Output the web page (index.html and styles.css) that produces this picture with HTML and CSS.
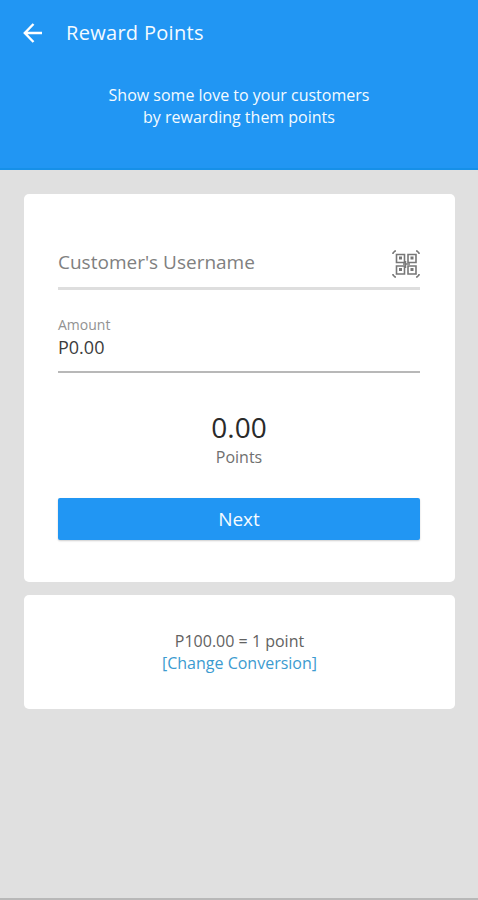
FILE: index.html
```html
<!DOCTYPE html>
<html lang="en">
<head>
<meta charset="utf-8">
<title>Reward Points</title>
<link rel="stylesheet" href="styles.css">
</head>
<body>
<div class="screen">
  <header class="header">
    <div class="toolbar">
      <svg class="back" viewBox="0 0 20 20" aria-label="Back"><path d="M19 10H2M10.5 1L1.8 10L10.5 19"/></svg>
      <h1 class="title">Reward Points</h1>
    </div>
    <p class="intro">Show some love to your customers<br>by rewarding them points</p>
  </header>
  <main class="content">
    <section class="card form">
      <div class="field username">
        <span class="placeholder">Customer's Username</span>
        <svg class="scan" viewBox="0 0 28 28" aria-label="Scan code">
          <path class="corner" d="M1 4V3L3 1H4M24 1H25L27 3V4M27 24V25L25 27H24M4 27H3L1 25V24"/>
          <path class="tile" d="M4.5 4.5H12.5V12.5H4.5ZM16 4.5H24V12.5H16ZM4.5 16H12.5V24H4.5ZM16 16H24V24H16Z"/>
          <path class="link" d="M13.5 11V18M11 14H18"/>
          <path class="dot" d="M7 6.500h3v3h-3zM18.500 6.500h3v3h-3zM7 18h3v3h-3zM18.500 18h3v3h-3z"/>
        </svg>
      </div>
      <div class="field amount">
        <span class="label">Amount</span>
        <span class="value">P0.00</span>
      </div>
      <div class="total">0.00</div>
      <div class="unit">Points</div>
      <button class="next" type="button">Next</button>
    </section>
    <section class="card conversion">
      <span class="rate">P100.00 = 1 point</span>
      <a class="change">[Change Conversion]</a>
    </section>
  </main>
</div>
</body>
</html>
```
FILE: styles.css
```css
* { box-sizing: border-box; }
body { margin: 0; font-family: "Open Sans", "Noto Sans", sans-serif; }
.screen {
  height: 900px;
  overflow: hidden;
  background: #e0e0e0;
  border-bottom: 2px solid #b8b8b8;
}
.header {
  height: 170px;
  background: #2196f3;
  border-bottom: 2px solid #1690e8;
  color: #f4fbff;
}
.toolbar {
  display: flex;
  align-items: center;
  height: 66px;
  padding-left: 23px;
}
.back {
  width: 20px;
  height: 20px;
  fill: none;
  stroke: #fff;
  stroke-width: 2.4;
}
.title {
  margin: 0 0 0 23px;
  font-size: 20px;
  line-height: 28px;
  font-weight: 400;
  letter-spacing: 0.3px;
}
.intro {
  margin: 18px 0 0;
  font-size: 16px;
  line-height: 22px;
  text-align: center;
}
.content {
  display: flex;
  flex-direction: column;
  gap: 13px;
  padding: 24px 23px 0 24px;
}
.card {
  background: #fff;
  border-radius: 5px;
}
.form {
  height: 388px;
  padding: 48px 35px 0 34px;
}
.field { display: flex; }
.username {
  height: 48px;
  justify-content: space-between;
  border-bottom: 3px solid #dedede;
}
.placeholder {
  padding-top: 7px;
  font-size: 19px;
  line-height: 26px;
  color: #808080;
}
.scan {
  width: 28px;
  height: 28px;
  margin-top: 8px;
  fill: none;
  stroke: #777;
}
.corner { stroke-width: 1.6; }
.tile { stroke-width: 1.6; }
.link { stroke-width: 1.5; }
.dot { fill: #777; stroke: none; }
.amount {
  flex-direction: column;
  height: 83px;
  padding-top: 25px;
  border-bottom: 2px solid #b8b8b8;
}
.label {
  font-size: 14px;
  line-height: 20px;
  color: #929292;
}
.value {
  font-size: 18px;
  line-height: 24px;
  color: #3c3c3c;
}
.total {
  margin-top: 35px;
  font-size: 28px;
  line-height: 38px;
  text-align: center;
  color: #2a2a2a;
}
.unit {
  font-size: 16px;
  line-height: 22px;
  text-align: center;
  color: #707070;
}
.next {
  display: block;
  width: 100%;
  height: 42px;
  margin-top: 30px;
  padding: 0;
  border: 0;
  border-radius: 2px;
  background: #2196f3;
  box-shadow: 0 1px 2px rgba(0, 0, 0, 0.2);
  font: 400 19px/42px "Open Sans", "Noto Sans", sans-serif;
  color: #f4fbff;
}
.conversion {
  display: flex;
  flex-direction: column;
  align-items: center;
  height: 114px;
  padding-top: 35px;
  font-size: 16px;
  line-height: 22px;
}
.rate { color: #626262; }
.change { color: #3c9bd0; }
```
